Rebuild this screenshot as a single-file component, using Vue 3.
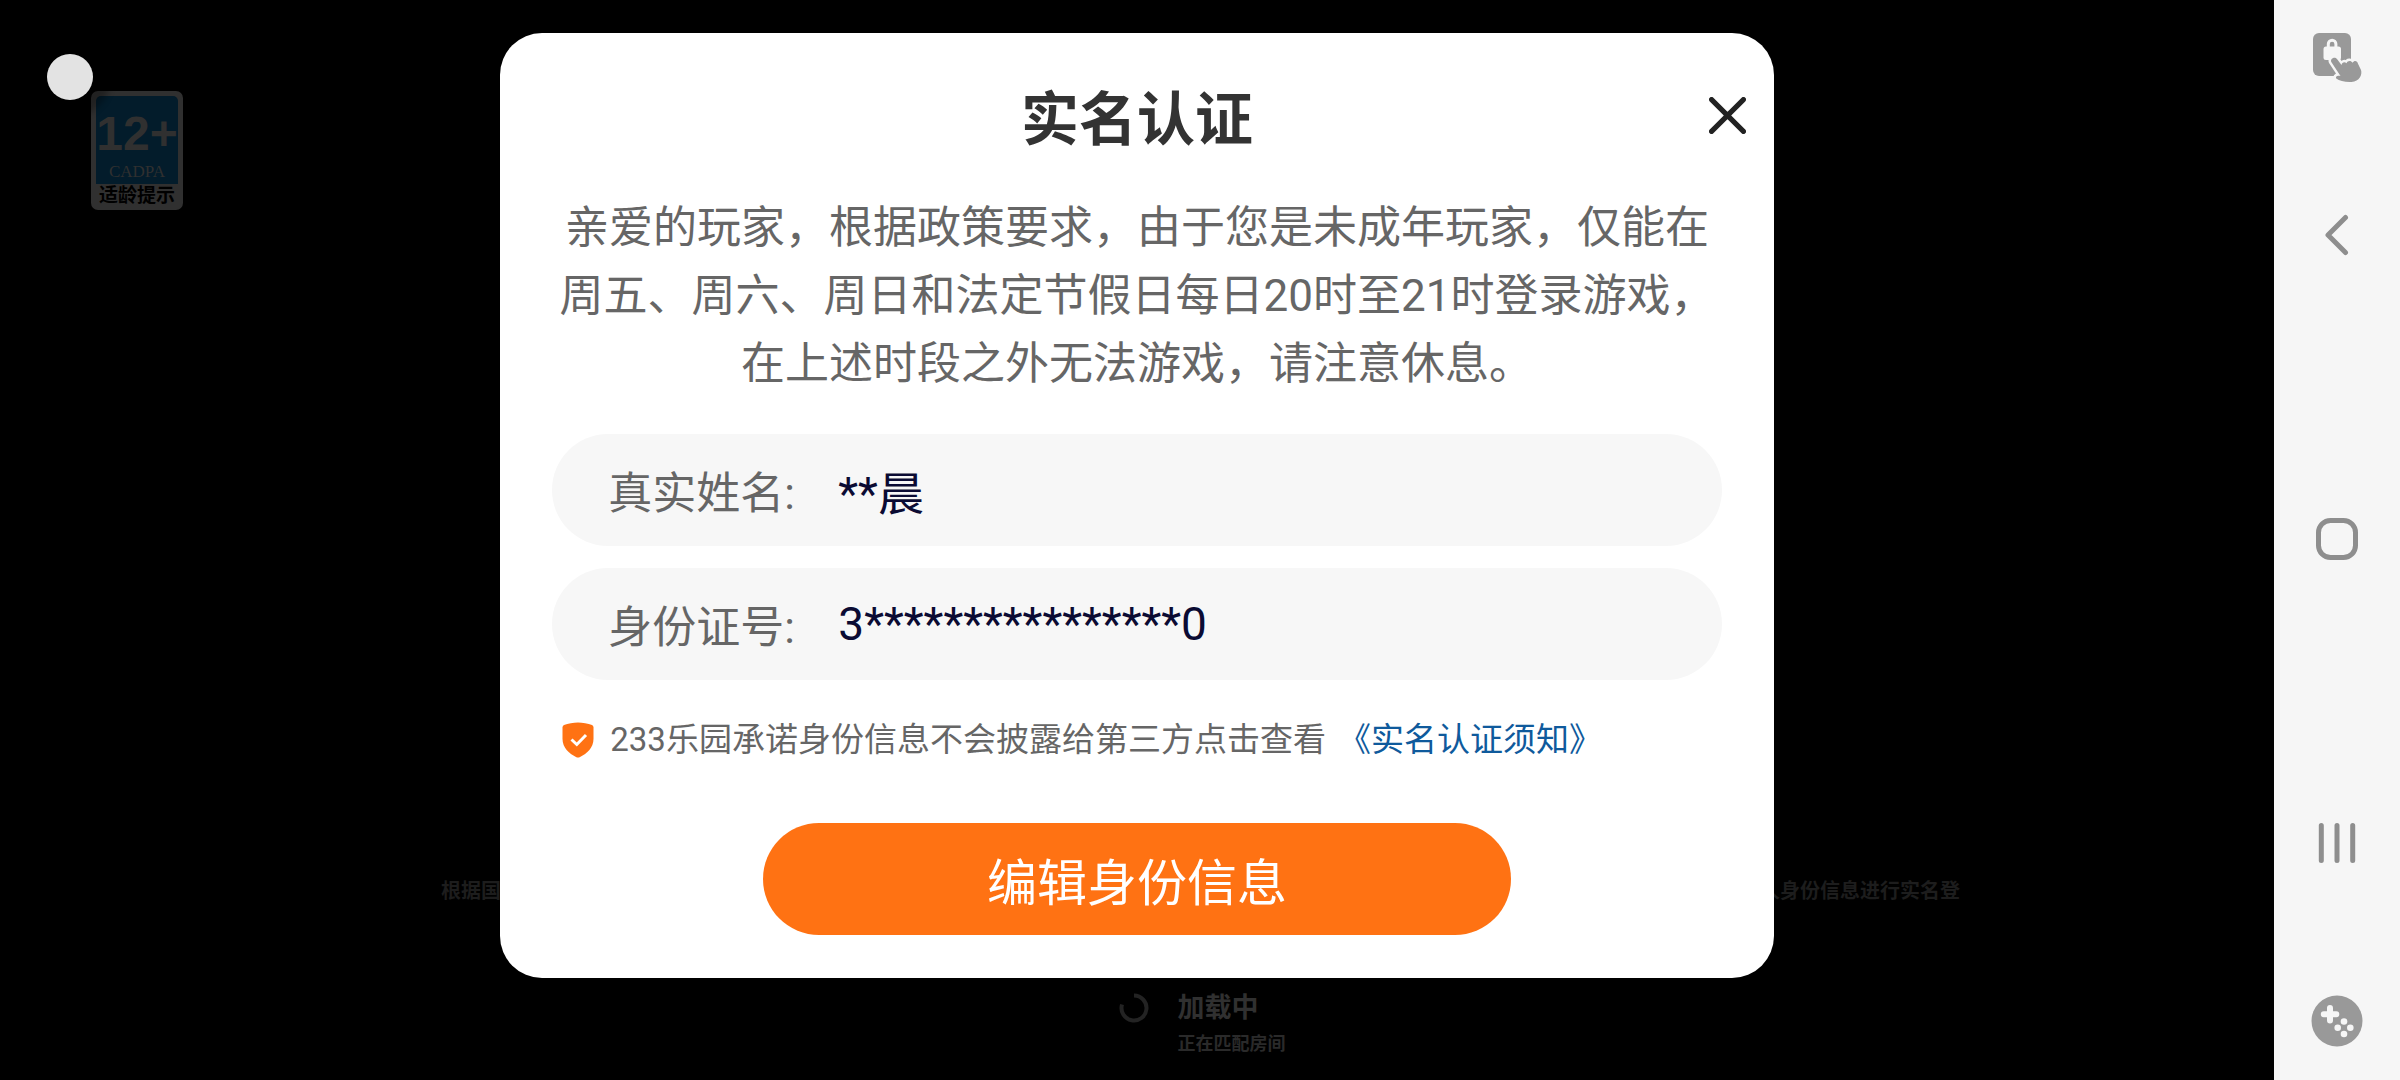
<template>
  <div class="screen">
    <main class="stage">
      <div class="game">
        <div class="age-badge">
          <div class="age-top">
            <span class="age-num">12+</span>
            <span class="age-org">CADPA</span>
          </div>
          <span class="age-tip">适龄提示</span>
        </div>
        <button class="float-ball" type="button" aria-label="悬浮球"></button>

        <div class="game-bottom">
          <p class="notice">
            <span>根据国</span>
            <span>人身份信息进行实名登</span>
          </p>
          <div class="loading">
            <svg class="spinner" viewBox="0 0 30 30">
              <path d="M15 2.5A12.5 12.5 0 1 1 3 11.5" />
            </svg>
            <div>
              <p class="loading-title">加载中</p>
              <p class="loading-sub">正在匹配房间</p>
            </div>
          </div>
        </div>
      </div>

      <form class="dialog" role="dialog" aria-labelledby="dialog-title" @submit.prevent>
        <header class="dialog-head">
          <h1 id="dialog-title">实名认证</h1>
          <button class="close" type="button" aria-label="关闭">
            <svg viewBox="0 0 36 36">
              <path d="M2.5 2.5l31 31M33.5 2.5l-31 31" />
            </svg>
          </button>
        </header>

        <p class="message">{{ message }}</p>

        <div class="fields">
          <div v-for="field in fields" :key="field.id" class="field">
            <label :for="field.id">{{ field.label }}:</label>
            <input :id="field.id" type="text" :value="field.value" readonly />
          </div>
        </div>

        <p class="promise">
          <svg class="shield" viewBox="0 0 32 36">
            <path
              class="shield-body"
              d="M16 .5C20.5 .5 26 1.5 30 3Q31.5 3.6 31.5 5.5V17C31.5 25.5 25 31.500 18 35Q16 36 14 35C7 31.5 .5 25.5 .5 17V5.5Q.5 3.6 2 3C6 1.5 11.5 .5 16 .5Z"
            />
            <path class="shield-check" d="M9.5 17.5l5.3 5L24 13" />
          </svg>
          <span>233乐园承诺身份信息不会披露给第三方点击查看</span>
          <a href="#">《实名认证须知》</a>
        </p>

        <button class="submit" type="submit">编辑身份信息</button>
      </form>
    </main>

    <nav class="navbar">
      <button type="button" aria-label="触摸锁定">
        <svg viewBox="0 0 52 52">
          <rect class="fill" x="2" y="2" width="38" height="43" rx="6" />
          <path class="shackle" d="M17.3 17v-4a3.8 3.8 0 0 1 7.600 0v4" />
          <rect class="light" x="12.5" y="15.5" width="17.5" height="13.5" rx="2.5" />
          <path
            class="hand"
            d="M20.3 31C18.800 28 23.500 24.800 26 28L30.500 34C31 31.500 33.500 30.300 35.500 32.300C36.500 29.500 40 29.300 41.500 31.700C43.500 29 46.200 29.700 47 32.700L50 39C51.500 43.500 48.500 50.500 40.500 51C34 51.300 28.500 50 25.200 47.500C24.200 45.200 26.500 44 29.500 45Z"
          />
        </svg>
      </button>
      <div class="nav-keys">
        <button type="button" aria-label="返回">
          <svg viewBox="0 0 52 52">
            <path class="line" d="M34.5 8.5L17 26l17.5 17.5" />
          </svg>
        </button>
        <button type="button" aria-label="主页">
          <svg viewBox="0 0 52 52">
            <rect class="line" x="7.5" y="7.5" width="37" height="37" rx="12" />
          </svg>
        </button>
        <button type="button" aria-label="最近任务">
          <svg viewBox="0 0 52 52">
            <path class="line" d="M10.3 8.5v35M26 8.5v35M41.7 8.5v35" />
          </svg>
        </button>
      </div>
      <button type="button" aria-label="游戏工具">
        <svg viewBox="0 0 52 52">
          <circle class="fill" cx="26" cy="26" r="25.5" />
          <path class="pad" d="M19 13v12.5M12.8 19.2h12.5" />
          <g class="light">
            <circle cx="33" cy="26.5" r="3.3" />
            <circle cx="33" cy="39" r="3.3" />
            <circle cx="26.7" cy="32.8" r="3.3" />
            <circle cx="39.3" cy="32.8" r="3.3" />
          </g>
        </svg>
      </button>
    </nav>
  </div>
</template>

<script setup>
const message =
  "亲爱的玩家，根据政策要求，由于您是未成年玩家，仅能在周五、周六、周日和法定节假日每日20时至21时登录游戏，在上述时段之外无法游戏，请注意休息。";

const fields = [
  { id: "real-name", label: "真实姓名", value: "**晨" },
  { id: "id-number", label: "身份证号", value: "3" + "*".repeat(16) + "0" },
];
</script>

<style>
body {
  margin: 0;
  background: #000;
}
</style>

<style scoped>
.screen {
  display: flex;
  min-height: 100vh;
  font-family: Roboto, "Noto Sans CJK SC", sans-serif;
}

p,
h1 {
  margin: 0;
}

button {
  padding: 0;
  border: none;
  background: none;
  font-family: inherit;
  cursor: pointer;
}

svg {
  display: block;
  fill: none;
}

.stage {
  flex: 1;
  display: grid;
  background: #000;
}

.game,
.dialog {
  grid-area: 1 / 1;
}

/* dimmed game behind the dialog */
.game {
  position: relative;
  display: flex;
  flex-direction: column;
  justify-content: space-between;
  align-items: flex-start;
}

.age-badge {
  box-sizing: border-box;
  width: 92px;
  margin: 91px 0 0 91px;
  padding: 5px 5px 2px;
  border-radius: 7px;
  background: #303030;
  text-align: center;
}

.age-top {
  display: flex;
  flex-direction: column;
  align-items: center;
  height: 88px;
  border-radius: 5px 5px 0 0;
  background: #031c2b;
  color: #303030;
}

.age-num {
  padding-top: 8px;
  font: bold 48px/60px "Liberation Sans", sans-serif;
}

.age-org {
  font: 17px/16px "Liberation Serif", serif;
}

.age-tip {
  display: block;
  color: #000;
  font-size: 19px;
  font-weight: 700;
  line-height: 24px;
}

.float-ball {
  position: absolute;
  top: 54px;
  left: 47px;
  width: 46px;
  height: 46px;
  border-radius: 50%;
  background: #e3e3e3;
  box-shadow: 0 0 6px 18px rgba(0, 0, 0, 0.3);
}

.game-bottom {
  width: 100%;
}

.notice {
  display: flex;
  justify-content: space-between;
  width: 1519px;
  margin: 0 auto 85px;
  padding-left: 127px;
  color: #1d1d1d;
  font-size: 20px;
  font-weight: 700;
  line-height: 28px;
}

.loading {
  display: flex;
  justify-content: center;
  gap: 29px;
  padding: 0 0 18px 130px;
  font-weight: 700;
}

.spinner {
  width: 30px;
  height: 30px;
  margin-top: 3px;
  stroke: #232323;
  stroke-width: 4;
}

.loading-title {
  color: #303030;
  font-size: 27px;
  line-height: 36px;
}

.loading-sub {
  color: #2a2a2a;
  font-size: 18px;
  line-height: 36px;
}

.dialog {
  position: relative;
  box-sizing: border-box;
  align-self: start;
  justify-self: center;
  width: 56%;
  margin-top: 33px;
  padding: 45px 52px 43px;
  border-radius: 42px;
  background: #fff;
}

.dialog-head h1 {
  color: #333;
  font-size: 58px;
  font-weight: 700;
  line-height: 84px;
  text-align: center;
}

.close {
  position: absolute;
  top: 64px;
  right: 28px;
}

.close svg {
  width: 37px;
  height: 37px;
  stroke: #222;
  stroke-width: 5;
  stroke-linecap: round;
}

.message {
  margin-top: 32px;
  color: #666;
  font-size: 44px;
  line-height: 68px;
  text-align: center;
}

.fields {
  display: flex;
  flex-direction: column;
  gap: 22px;
  margin-top: 36px;
}

.field {
  display: flex;
  align-items: center;
  height: 112px;
  padding: 0 56px;
  border-radius: 56px;
  background: #f7f7f7;
}

.field label {
  width: 230px;
  color: #666;
  font-size: 44px;
}

.field input {
  flex: 1;
  min-width: 0;
  padding: 0;
  border: none;
  outline: none;
  background: none;
  color: #0b0b33;
  font-family: inherit;
  font-size: 46px;
}

.promise {
  display: flex;
  align-items: center;
  margin: 36px 0 0 10px;
  color: #666;
  font-size: 33px;
  line-height: 48px;
}

.promise a {
  margin-left: 12px;
  color: #0f5a9c;
  text-decoration: none;
}

.shield {
  width: 32px;
  height: 36px;
  margin-right: 16px;
}

.shield-body {
  fill: #ff7213;
}

.shield-check {
  stroke: #fff;
  stroke-width: 3;
}

.submit {
  display: block;
  width: 64%;
  height: 112px;
  margin: 59px auto 0;
  border-radius: 56px;
  background: #ff7213;
  color: #fff;
  font-size: 50px;
}

.navbar {
  box-sizing: border-box;
  display: flex;
  flex-direction: column;
  align-items: center;
  width: 126px;
  padding: 31px 0 33px;
  background: #f6f6f6;
}

.navbar svg {
  width: 52px;
  height: 52px;
}

.nav-keys {
  flex: 1;
  display: flex;
  flex-direction: column;
  justify-content: space-around;
}

.fill {
  fill: #999;
}

.light {
  fill: #f6f6f6;
}

.line {
  stroke: #8e8e8e;
  stroke-width: 5;
  stroke-linecap: round;
  stroke-linejoin: round;
}

.shackle {
  stroke: #f6f6f6;
  stroke-width: 3;
}

.hand {
  fill: #999;
  stroke: #f6f6f6;
  stroke-width: 5;
  stroke-linejoin: round;
  paint-order: stroke;
}

.pad {
  stroke: #f6f6f6;
  stroke-width: 6;
  stroke-linecap: round;
}
</style>
